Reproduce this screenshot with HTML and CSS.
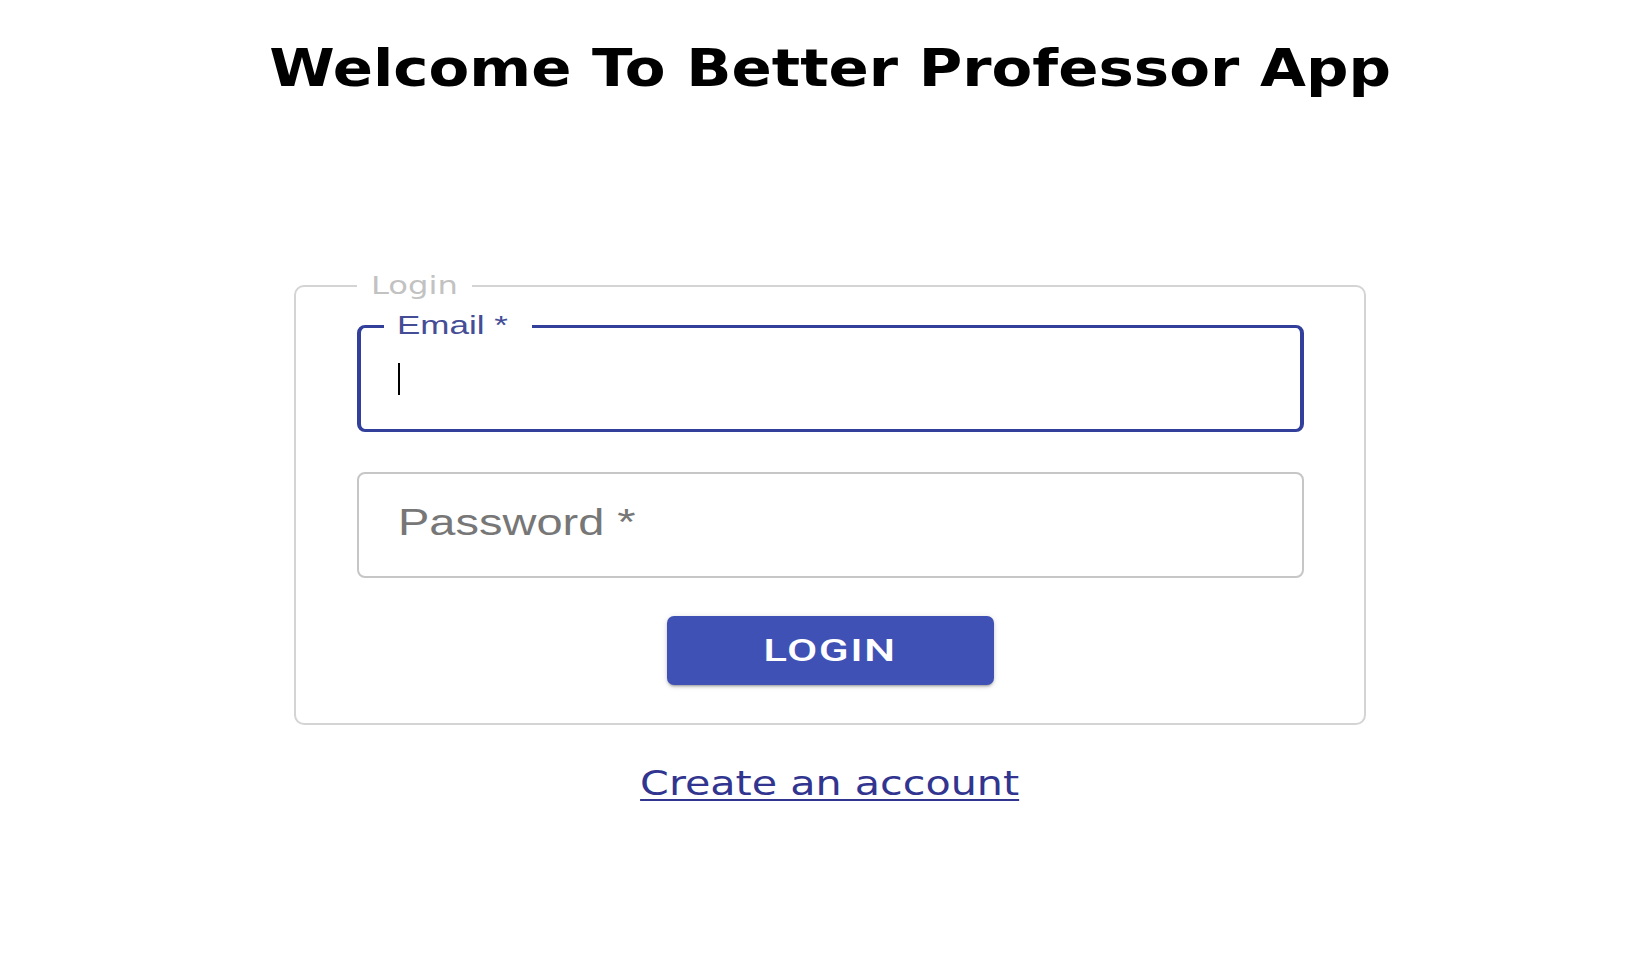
FILE: index.html
```html
<!DOCTYPE html>
<html lang="en">
<head>
<meta charset="utf-8">
<title>Better Professor App</title>
<link rel="stylesheet" href="styles.css">
</head>
<body>
<main class="page">
  <h1 class="title"><span class="title-text">Welcome To Better Professor App</span></h1>
  <form class="login-form">
    <fieldset class="login-box">
      <legend class="login-legend"><span class="legend-text">Login</span></legend>
      <div class="field field--focused">
        <label class="field-label"><span class="label-text">Email *</span></label>
        <span class="caret"></span>
      </div>
      <div class="field">
        <span class="placeholder">Password *</span>
      </div>
      <button type="button" class="login-btn"><span class="btn-text">LOGIN</span></button>
    </fieldset>
  </form>
  <a class="create-link" href="#"><span class="link-text">Create an account</span></a>
</main>
</body>
</html>
```

FILE: styles.css
```css
html, body {
  margin: 0;
  padding: 0;
  background: #ffffff;
}

.page {
  display: flex;
  flex-direction: column;
  align-items: center;
  padding: 38px 0 0 9px;
  font-family: "DejaVu Sans", Verdana, sans-serif;
}

.title {
  margin: 0;
  font-family: "DejaVu Sans", Verdana, sans-serif;
  font-weight: 700;
  font-size: 52px;
  line-height: 60px;
  color: #000;
}

.title-text {
  display: inline-block;
  transform: scaleX(1.142);
  transform-origin: center;
}

.login-form {
  margin-top: 173px;
}

.login-box {
  box-sizing: border-box;
  width: 1072px;
  margin: 0;
  padding: 24px 60px 38px 61px;
  border: 2px solid #d4d4d4;
  border-radius: 10px;
  display: flex;
  flex-direction: column;
}

.login-legend {
  box-sizing: border-box;
  width: 115px;
  padding: 0 0 0 14px;
  font-family: "DejaVu Sans", Verdana, sans-serif;
  font-size: 24px;
  line-height: 30px;
  color: #c2c2c2;
}

.legend-text {
  display: inline-block;
  transform: scaleX(1.34);
  transform-origin: left center;
}

.field {
  position: relative;
  box-sizing: border-box;
  width: 947px;
  height: 106px;
  display: flex;
  align-items: center;
  border: 2px solid #c6c6c6;
  border-radius: 8px;
  padding-left: 37px;
  background: #fff;
}

.field + .field {
  margin-top: 40px;
}

.field--focused {
  border: 3px solid #33409b;
  border-left-width: 4px;
  border-right-width: 4px;
  height: 107px;
  padding-left: 37px;
}

.field-label {
  position: absolute;
  top: -16px;
  left: 23px;
  box-sizing: border-box;
  width: 148px;
  padding-left: 13px;
  background: #fff;
  font-family: "Liberation Sans", Arial, sans-serif;
  font-size: 25px;
  line-height: 26px;
  color: #444d96;
}

.label-text {
  display: inline-block;
  transform: scaleX(1.4);
  transform-origin: left center;
}

.caret {
  display: block;
  width: 2px;
  height: 32px;
  background: #000;
}

.placeholder {
  display: inline-block;
  font-family: "Liberation Sans", Arial, sans-serif;
  font-size: 37px;
  line-height: 44px;
  color: #777;
  transform: scaleX(1.27);
  transform-origin: left center;
  margin-left: 2px;
  margin-bottom: 4px;
}

.login-btn {
  align-self: center;
  margin-top: 38px;
  width: 327px;
  height: 69px;
  border: none;
  border-radius: 7px;
  background: #3f51b5;
  color: #fff;
  font-family: Roboto, "Liberation Sans", sans-serif;
  font-weight: 500;
  font-size: 31px;
  letter-spacing: 1px;
  box-shadow: 0 3px 2px -2px rgba(0,0,0,0.2), 0 2px 3px 0 rgba(0,0,0,0.14), 0 1px 6px 0 rgba(0,0,0,0.12);
  padding: 0;
  cursor: pointer;
}

.btn-text {
  display: inline-block;
  transform: scaleX(1.42);
  transform-origin: center;
}

.create-link {
  margin-top: 39px;
  font-family: "DejaVu Sans", Verdana, sans-serif;
  font-size: 33px;
  line-height: 40px;
  color: #31358f;
  text-decoration: none;
}

.link-text {
  display: inline-block;
  text-decoration: underline;
  text-decoration-thickness: 2px;
  text-underline-offset: 4px;
  transform: scaleX(1.25);
  transform-origin: center;
}
```
